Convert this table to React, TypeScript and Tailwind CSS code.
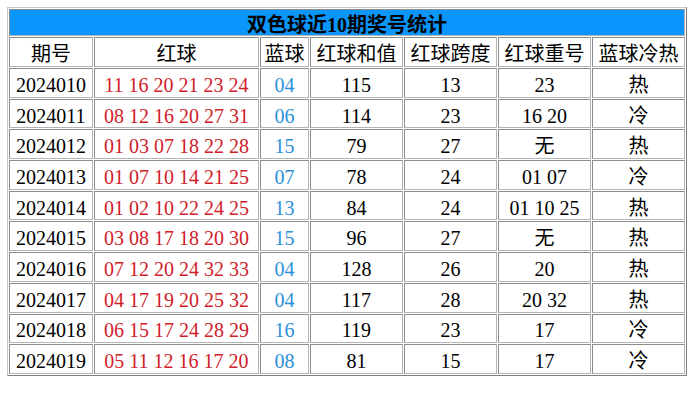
const ROWS = [
  { issue: "2024010", red: "11 16 20 21 23 24", blue: "04", sum: "115", span: "13", repeat: "23", hot: "热" },
  { issue: "2024011", red: "08 12 16 20 27 31", blue: "06", sum: "114", span: "23", repeat: "16 20", hot: "冷" },
  { issue: "2024012", red: "01 03 07 18 22 28", blue: "15", sum: "79", span: "27", repeat: "无", hot: "热" },
  { issue: "2024013", red: "01 07 10 14 21 25", blue: "07", sum: "78", span: "24", repeat: "01 07", hot: "冷" },
  { issue: "2024014", red: "01 02 10 22 24 25", blue: "13", sum: "84", span: "24", repeat: "01 10 25", hot: "热" },
  { issue: "2024015", red: "03 08 17 18 20 30", blue: "15", sum: "96", span: "27", repeat: "无", hot: "热" },
  { issue: "2024016", red: "07 12 20 24 32 33", blue: "04", sum: "128", span: "26", repeat: "20", hot: "热" },
  { issue: "2024017", red: "04 17 19 20 25 32", blue: "04", sum: "117", span: "28", repeat: "20 32", hot: "热" },
  { issue: "2024018", red: "06 15 17 24 28 29", blue: "16", sum: "119", span: "23", repeat: "17", hot: "冷" },
  { issue: "2024019", red: "05 11 12 16 17 20", blue: "08", sum: "81", span: "15", repeat: "17", hot: "冷" },
];

const HEADERS = ["期号", "红球", "蓝球", "红球和值", "红球跨度", "红球重号", "蓝球冷热"];
const COLS = ["w-[84px]", "w-[165px]", "w-[49px]", "w-[93px]", "w-[93px]", "w-[93px]", "w-[93px]"];

const cell =
  "whitespace-nowrap border border-t-[#8c8c8c] border-l-[#8c8c8c] border-r-[#b4b4b4] border-b-[#b4b4b4] px-0 pb-0 pt-[4px] text-center align-middle leading-none";

export default function App() {
  return (
    <div className="bg-white px-[7px] py-[7px] font-['Liberation_Serif','Noto_Sans_CJK_SC',serif] text-[20px] text-black">
      <table className="table-fixed border-separate border-spacing-[1px] border border-t-[#c8c8c8] border-l-[#c8c8c8] border-r-[#808080] border-b-[#808080]">
        <colgroup>
          {COLS.map((w, i) => (
            <col key={i} className={w} />
          ))}
        </colgroup>
        <thead>
          <tr>
            <th colSpan={7} className={`${cell} h-[27px] bg-[#0a96fc] font-bold`}>
              双色球近10期奖号统计
            </th>
          </tr>
          <tr>
            {HEADERS.map((h) => (
              <th key={h} className={`${cell} h-[30px] font-normal`}>
                {h}
              </th>
            ))}
          </tr>
        </thead>
        <tbody>
          {ROWS.map((r) => (
            <tr key={r.issue}>
              <td className={`${cell} h-[29.7px]`}>{r.issue}</td>
              <td className={`${cell} text-[#d0202a]`}>{r.red}</td>
              <td className={`${cell} text-[#2a8fd8]`}>{r.blue}</td>
              <td className={cell}>{r.sum}</td>
              <td className={cell}>{r.span}</td>
              <td className={cell}>{r.repeat}</td>
              <td className={cell}>{r.hot}</td>
            </tr>
          ))}
        </tbody>
      </table>
    </div>
  );
}
